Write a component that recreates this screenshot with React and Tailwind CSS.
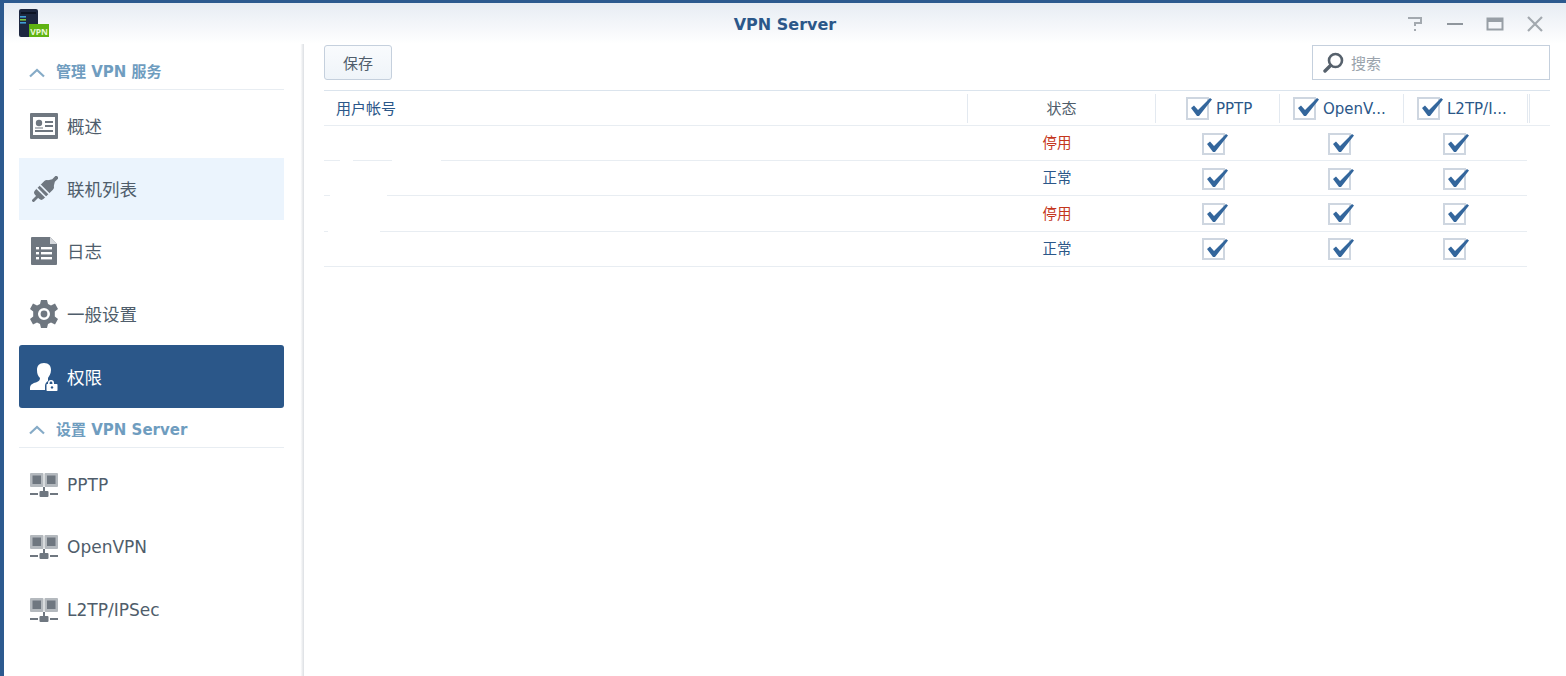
import React from 'react';

const FONT = '"DejaVu Sans", "Noto Sans CJK SC", sans-serif';

function OverviewIcon() {
  return (
    <svg width="28" height="26" viewBox="0 0 28 26">
      <rect x="0" y="0" width="28" height="26" rx="1" fill="#6f7780" />
      <rect x="3" y="4" width="22" height="18" fill="#fff" />
      <circle cx="9" cy="10" r="3.2" fill="#6f7780" />
      <path d="M5 14.5 h8 v1 h-8 z" fill="#6f7780" />
      <rect x="15" y="8" width="8" height="2" fill="#6f7780" />
      <rect x="15" y="12" width="8" height="2" fill="#6f7780" />
      <rect x="5" y="17" width="18" height="2" fill="#6f7780" />
    </svg>
  );
}

function PlugIcon() {
  return (
    <svg className="ml-[2px]" width="26" height="26" viewBox="-14 -14 28 28">
      <g transform="rotate(-45)">
        <rect x="-19" y="-1.5" width="8" height="3" fill="#6f7780" />
        <rect x="-12" y="-6.5" width="21" height="13" rx="3.5" fill="#6f7780" />
        <path d="M8 -5 L13 -2 H19 V2 H13 L8 5 Z" fill="#6f7780" />
        <rect x="-6.5" y="-7" width="1.8" height="14" fill="#ebf4fd" />
        <rect x="-1.5" y="-7" width="1.8" height="14" fill="#ebf4fd" />
      </g>
    </svg>
  );
}

function LogIcon() {
  return (
    <svg className="ml-[1px]" width="26" height="28" viewBox="0 0 26 28">
      <path d="M1 0 H19 L26 7 V27 Q26 28 25 28 H1 Q0 28 0 27 V1 Q0 0 1 0 Z" fill="#6f7780" />
      <path d="M19 0 L26 7 H19 Z" fill="#d5d8dc" />
      <g fill="#fff">
        <rect x="5" y="10" width="3" height="2.4" />
        <rect x="10" y="10" width="11" height="2.4" />
        <rect x="5" y="15" width="3" height="2.4" />
        <rect x="10" y="15" width="11" height="2.4" />
        <rect x="5" y="20" width="3" height="2.4" />
        <rect x="10" y="20" width="11" height="2.4" />
      </g>
    </svg>
  );
}

function GearIcon() {
  return (
    <svg width="28" height="28" viewBox="0 0 28 28">
      <path
        fill="#6f7780"
        fillRule="evenodd"
        d="M11 0 H17 L18 4 L21 5.5 L25 3.5 L28 9 L24.8 11.6 V16.4 L28 19 L25 24.5 L21 22.5 L18 24 L17 28 H11 L10 24 L7 22.5 L3 24.5 L0 19 L3.2 16.4 V11.6 L0 9 L3 3.5 L7 5.5 L10 4 Z M14 8 A6 6 0 1 0 14 20 A6 6 0 1 0 14 8 Z"
      />
      <circle cx="14" cy="14" r="3.4" fill="#6f7780" />
    </svg>
  );
}

function UserLockIcon() {
  return (
    <svg width="28" height="28" viewBox="0 0 28 28">
      <path
        fill="#fff"
        d="M14 0 C19 0 21 3 21 7 C21 11 19 13 18 15 V18 C16 19 15 21 15 23 V27 H0 V25 C0 21 4 20 7 19 C9 18 10 17 10 15 C8 13 7 11 7 7 C7 3 9 0 14 0 Z"
      />
      <path d="M21 17 a3 3 0 0 1 3 3 v1 h-1.6 v-1 a1.4 1.4 0 0 0 -2.8 0 v1 H18 v-1 a3 3 0 0 1 3 -3 Z" fill="#fff" />
      <rect x="16.5" y="21" width="11" height="7" rx="0.8" fill="#fff" />
      <circle cx="22" cy="24.4" r="1.2" fill="#2b5789" />
    </svg>
  );
}

function NetworkIcon() {
  return (
    <svg className="mt-[1px]" width="28" height="24" viewBox="0 0 28 24">
      <rect x="0" y="0" width="13.5" height="14" rx="1" fill="#b4b9be" />
      <rect x="14.5" y="0" width="13.5" height="14" rx="1" fill="#b4b9be" />
      <rect x="2.5" y="2.5" width="8.5" height="8.5" fill="#6f7780" />
      <rect x="17" y="2.5" width="8.5" height="8.5" fill="#6f7780" />
      <rect x="13" y="14" width="2" height="4" fill="#6f7780" />
      <rect x="0" y="20" width="8" height="2" fill="#6f7780" />
      <rect x="20" y="20" width="8" height="2" fill="#6f7780" />
      <rect x="9.5" y="18" width="9" height="6" rx="1" fill="#6f7780" />
    </svg>
  );
}

function Chevron() {
  return (
    <svg width="16" height="10" viewBox="0 0 16 10">
      <path d="M1 8.5 L8 2 L15 8.5" fill="none" stroke="#86abc7" strokeWidth="2.2" />
    </svg>
  );
}

function Logo() {
  return (
    <svg width="32" height="30" viewBox="0 0 32 30">
      <rect x="1" y="0" width="19" height="28" rx="2" fill="#1d2740" />
      <rect x="3" y="3" width="15" height="2" fill="#0d1424" />
      <rect x="2" y="7" width="6" height="1.6" fill="#3f9fd8" />
      <rect x="2" y="10" width="6" height="1.6" fill="#7dc63f" />
      <rect x="2" y="13" width="6" height="1.6" fill="#3f9fd8" />
      <rect x="11" y="15" width="20" height="13" fill="#5fb312" />
      <text x="21" y="26" textAnchor="middle" fontSize="8.5" fontWeight="700" fill="#e8f7d6" fontFamily="Noto Sans, sans-serif">
        VPN
      </text>
    </svg>
  );
}

function Check({ large }) {
  return (
    <span className={`relative block shrink-0 border-2 border-[#ced6e0] bg-white ${large ? 'h-[23px] w-[23px]' : 'h-[22px] w-[23px]'}`}>
      <svg className="absolute -top-[3px] left-[1px]" width="25" height="22" viewBox="0 0 25 22">
        <path d="M2 12 L5 9.5 L9 14 L21 2 L23 3.5 L10 20 L8 20 Z" fill="#33669c" />
      </svg>
    </span>
  );
}

function SectionTitle({ children }) {
  return (
    <div className="ml-[15px] mr-[20px] flex h-[40px] items-center gap-[11px] border-b border-[#e8edf2] pl-[10px] pt-[6px] text-[15px] font-bold text-[#6f9dbf]">
      <Chevron />
      <span>{children}</span>
    </div>
  );
}

function NavItem({ icon, label, active, hover, latin }) {
  let cls = 'text-[#4f5d6b]';
  if (active) cls = 'rounded-[3px] bg-[#2b5789] text-white';
  if (hover) cls = 'bg-[#ebf4fd] text-[#4f5d6b]';
  return (
    <div className={`ml-[15px] mr-[20px] flex h-[62.6px] items-center pl-[11px] ${cls}`}>
      <span className="flex w-[37px] shrink-0 items-center">{icon}</span>
      <span className={`pt-[2px] ${latin ? 'text-[17px]' : 'text-[17.5px]'}`}>{label}</span>
    </div>
  );
}

const users = [
  { status: '停用', off: true, gaps: ['left-[16px] w-[13px]', 'left-[68px] w-[49px]'] },
  { status: '正常', off: false, gaps: ['left-[6px] w-[57px]'] },
  { status: '停用', off: true, gaps: ['left-[4px] w-[52px]'] },
  { status: '正常', off: false, gaps: [] },
];

function UserRow({ user }) {
  return (
    <div className="relative flex h-[35.2px] w-[1203px] items-center border-b border-[#e8edf2]">
      <span className={`ml-[718px] w-[30px] pt-[2px] text-center text-[14.5px] ${user.off ? 'text-[#c4361c]' : 'text-[#2b5789]'}`}>
        {user.status}
      </span>
      <span className="ml-[130px] mt-[1px]"><Check /></span>
      <span className="ml-[103px] mt-[1px]"><Check /></span>
      <span className="ml-[92px] mt-[1px]"><Check /></span>
      {user.gaps.map((g) => (
        <span key={g} className={`absolute -bottom-px h-px bg-white ${g}`} />
      ))}
    </div>
  );
}

function HeadCell({ width, children }) {
  return (
    <div className={`flex h-[29px] shrink-0 items-center border-r border-[#e3e9f0] ${width}`}>
      {children}
    </div>
  );
}

export default function App() {
  return (
    <div
      className="flex h-[676px] w-full flex-col overflow-hidden border-l-4 border-t-[3px] border-[#2d5a8f] bg-white"
      style={{ fontFamily: FONT }}
    >
      <div className="grid h-[41px] shrink-0 grid-cols-3 items-center bg-gradient-to-b from-[#e7ecf3] to-white">
        <div className="pl-[14px]"><Logo /></div>
        <div className="pt-[2px] text-center text-[16px] font-bold text-[#2b5789]">VPN Server</div>
        <div className="flex items-center justify-end gap-[22px] pr-[22px]">
          <svg width="18" height="16" viewBox="0 0 18 16">
            <path d="M2 2 H15 V7 H9 V10" fill="none" stroke="#a3a9af" strokeWidth="2" />
            <rect x="8" y="13" width="2" height="2" fill="#a3a9af" />
          </svg>
          <svg width="18" height="16" viewBox="0 0 18 16"><rect x="1" y="7" width="16" height="2" fill="#8f969d" /></svg>
          <svg width="18" height="16" viewBox="0 0 18 16">
            <rect x="1.5" y="2.5" width="15" height="11" fill="none" stroke="#989fa6" strokeWidth="2" />
            <rect x="1" y="2" width="16" height="4" fill="#989fa6" />
          </svg>
          <svg width="18" height="16" viewBox="0 0 18 16">
            <path d="M2 1 L16 15 M16 1 L2 15" stroke="#a3a9af" strokeWidth="2.2" />
          </svg>
        </div>
      </div>

      <div className="flex min-h-0 flex-1">
        <aside className="w-[300px] shrink-0 bg-gradient-to-r from-white from-[98.8%] to-[#dcdfe3] pt-[6px]">
          <SectionTitle>管理 VPN 服务</SectionTitle>
          <div className="pt-[5px]">
            <NavItem icon={<OverviewIcon />} label="概述" />
            <NavItem icon={<PlugIcon />} label="联机列表" hover />
            <NavItem icon={<LogIcon />} label="日志" />
            <NavItem icon={<GearIcon />} label="一般设置" />
            <NavItem icon={<UserLockIcon />} label="权限" active />
          </div>
          <SectionTitle>设置 VPN Server</SectionTitle>
          <div className="pt-[5px]">
            <NavItem icon={<NetworkIcon />} label="PPTP" latin />
            <NavItem icon={<NetworkIcon />} label="OpenVPN" latin />
            <NavItem icon={<NetworkIcon />} label="L2TP/IPSec" latin />
          </div>
        </aside>

        <main className="min-w-0 flex-1 pl-[20px]">
          <div className="flex h-[46px] items-start justify-between pt-[1px] pr-[16px]">
            <button className="h-[35px] w-[68px] rounded-[3px] border border-[#c5d0dd] bg-gradient-to-b from-[#f9fbfd] to-[#eff4f9] pt-[3px] text-[15px] text-[#4f5d6b]">
              保存
            </button>
            <div className="flex h-[35px] w-[238px] items-center gap-[7px] border border-[#c5d0dd] pl-[10px] text-[15px] text-[#9aa3ac]">
              <svg width="21" height="21" viewBox="0 0 21 21">
                <circle cx="12.5" cy="8.5" r="6.5" fill="none" stroke="#56616c" strokeWidth="2.6" />
                <path d="M7.5 13.5 L2 19" stroke="#56616c" strokeWidth="3.4" strokeLinecap="round" />
              </svg>
              <span className="pt-[3px]">搜索</span>
            </div>
          </div>

          <div className="flex h-[36px] w-[1226px] items-center border-y border-[#dbe4ed] border-b-[#e8edf2] text-[15px] text-[#2b5789]">
            <HeadCell width="w-[644px] pl-[12px] pt-[2px]">用户帐号</HeadCell>
            <HeadCell width="w-[188px] justify-center pt-[2px] text-[#4f5d6b]">状态</HeadCell>
            <HeadCell width="w-[124px] pl-[30px] gap-[7px]"><Check large /><span className="pt-[2px]">PPTP</span></HeadCell>
            <HeadCell width="w-[124px] pl-[13px] gap-[7px]"><Check large /><span className="pt-[2px]">OpenV...</span></HeadCell>
            <HeadCell width="w-[124px] pl-[13px] gap-[7px]"><Check large /><span className="pt-[2px]">L2TP/I...</span></HeadCell>
            <div className="ml-[1px] h-[29px] border-r border-[#e3e9f0] w-px" />
          </div>

          {users.map((user, index) => (
            <UserRow key={index} user={user} />
          ))}
        </main>
      </div>
    </div>
  );
}
